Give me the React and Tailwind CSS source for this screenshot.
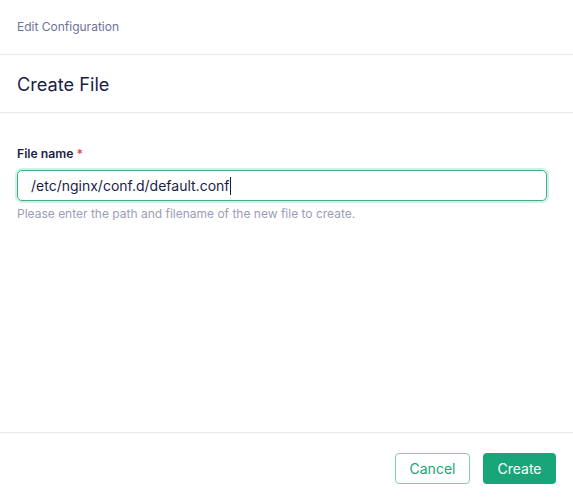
export default function App() {
  return (
    <div className="w-[573px] h-[501px] bg-white flex flex-col" style={{ fontFamily: "Inter, 'Noto Sans', sans-serif" }}>
      <div className="h-[55px] flex items-center px-[17px] border-b border-[#e6e8f0]">
        <span className="text-[12px] text-[#6e7395]">Edit Configuration</span>
      </div>
      <div className="h-[58px] flex items-center pt-[3px] px-[17px] border-b border-[#e6e8f0]">
        <h1 className="text-[18.2px] text-[#1b1d46]">Create File</h1>
      </div>
      <div className="flex-1 px-[17px] pt-[33px]">
        <div className="flex items-center gap-[3px] text-[12.2px] font-semibold text-[#1b1d46] leading-[16px]">
          File name<span className="text-[#e5484d]">*</span>
        </div>
        <div className="mt-[8px] h-[31px] w-[530px] rounded-[5px] border border-[#3fae86] ring-2 ring-[#d3f0e4] flex items-center px-[13px]">
          <span className="text-[14px] text-[#1b1d46]">/etc/nginx/conf.d/default.conf</span>
          <span className="w-[1.5px] h-[18px] bg-[#1b1d46]"></span>
        </div>
        <div className="mt-[4px] text-[12px] text-[#9a9eb8]">Please enter the path and filename of the new file to create.</div>
      </div>
      <div className="h-[69px] border-t border-[#e6e8f0] flex items-start pt-[20px] justify-end gap-[13px] px-[17px]">
        <button className="h-[31px] w-[75px] rounded-[4px] border border-[#86cbaf] text-[#22a377] text-[14px]">Cancel</button>
        <button className="h-[31px] w-[73px] rounded-[4px] bg-[#18a57a] text-white text-[14px]">Create</button>
      </div>
    </div>
  );
}
